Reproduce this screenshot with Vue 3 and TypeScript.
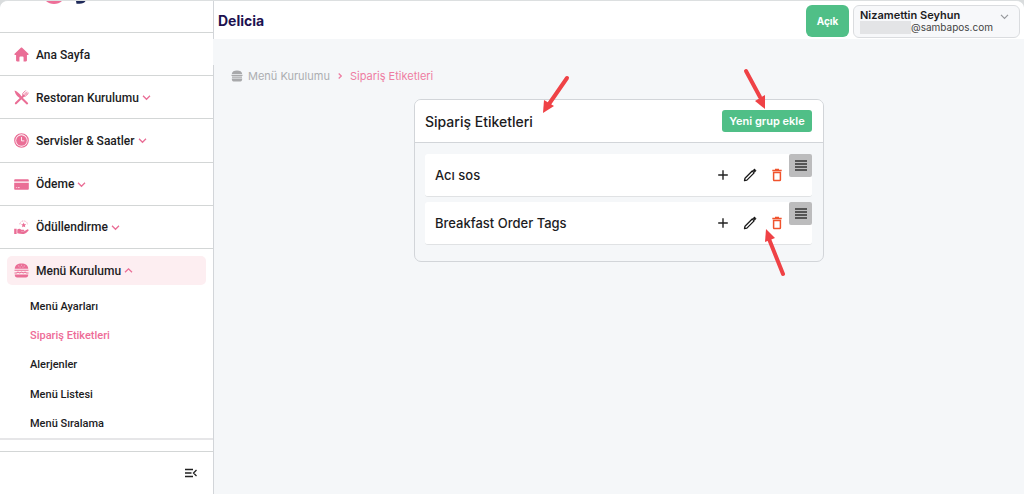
<script setup lang="ts">
import { ref } from 'vue'

type IconName = 'home' | 'tools' | 'clock' | 'card' | 'reward'

interface NavItem {
  label: string
  icon: IconName
  expandable: boolean
}

interface TagGroup {
  id: number
  name: string
}

const navItems: NavItem[] = [
  { label: 'Ana Sayfa', icon: 'home', expandable: false },
  { label: 'Restoran Kurulumu', icon: 'tools', expandable: true },
  { label: 'Servisler & Saatler', icon: 'clock', expandable: true },
  { label: 'Ödeme', icon: 'card', expandable: true },
  { label: 'Ödüllendirme', icon: 'reward', expandable: true },
]

const subItems: string[] = [
  'Menü Ayarları',
  'Sipariş Etiketleri',
  'Alerjenler',
  'Menü Listesi',
  'Menü Sıralama',
]

const activeSub = ref('Sipariş Etiketleri')
const menuOpen = ref(true)

const groups = ref<TagGroup[]>([
  { id: 1, name: 'Acı sos' },
  { id: 2, name: 'Breakfast Order Tags' },
])

function removeGroup(id: number): void {
  groups.value = groups.value.filter((g) => g.id !== id)
}
</script>

<template>
  <div class="app">
    <aside class="sidebar">
      <div class="brand">
        <svg width="44" height="4" viewBox="0 0 44 4" aria-hidden="true">
          <path d="M2 0h16c-2 2-5 3-8 3S4 2 2 0z" fill="#ee6f98" />
          <path d="M32 0h9.500c-1 1.800-3 2.800-6 2.800H32.500z" fill="#1f2a5a" />
        </svg>
      </div>
      <nav class="nav">
        <div class="nav-list">
          <a v-for="item in navItems" :key="item.label" class="nav-item" href="#">
            <svg class="nav-icon" viewBox="0 0 16 16" aria-hidden="true">
              <template v-if="item.icon === 'home'">
                <path d="M7.300.9c.4-.4 1-.4 1.400 0l6.700 6.400c.5.500.2 1.300-.5 1.300H13.800v5.600c0 .7-.4 1.200-1.100 1.200H10.200v-4.300c0-.7-.4-1.100-1-1.100H6.800c-.6 0-1 .4-1 1.100v4.300H3.300c-.7 0-1.100-.5-1.100-1.200V8.600H1.100c-.7 0-1-.8-.5-1.300z" fill="currentColor" />
              </template>
              <template v-else-if="item.icon === 'tools'">
                <path d="M.6.600C3 1.200 6.200 4.200 8.300 7.200L6.700 8.900C4 7.500 1 4.500.6.600z" fill="currentColor" />
                <path d="M8.800 9.300 14 14.300M2 14.200 10.500 5.800" stroke="currentColor" stroke-width="2.200" stroke-linecap="round" fill="none" />
                <path d="M12.200.8 9.600 3.400c-.7.800-.6 1.900.1 2.700.8.800 2 .9 2.800.2l2.700-2.600M13.500 2.100l-2.400 2.400M14.500 3l-2.400 2.400" stroke="currentColor" stroke-width="1" stroke-linecap="round" fill="none" />
              </template>
              <template v-else-if="item.icon === 'clock'">
                <circle cx="8" cy="8" r="7.200" fill="none" stroke="currentColor" stroke-width="1.300" />
                <circle cx="8" cy="8" r="5.700" fill="currentColor" />
                <path d="M8 4.300V8.400H11" fill="none" stroke="#fff" stroke-width=".9" />
              </template>
              <template v-else-if="item.icon === 'card'">
                <path d="M1.400 2.300h13.200c.7 0 1.200.5 1.200 1.200v1.300H.2V3.500c0-.7.500-1.200 1.200-1.200zM.2 6h15.600v6.500c0 .7-.5 1.200-1.200 1.200H1.400c-.7 0-1.200-.5-1.200-1.200z" fill="currentColor" />
                <path d="M2 11.300h1M4 11.300h2" stroke="#fff" stroke-width=".8" />
              </template>
              <template v-else>
                <path d="M.2 9.300h2.600v5.600H.2zM3.500 10c1.800-1 3.200-.7 4.300.3h2.500c1 0 1 1.300 0 1.300H7.500v.5h3.300l3.300-2c.9-.5 2 .5 1.200 1.400-1.300 1.500-2.700 3.300-5 3.400-2.500.1-4.500-.2-6.800-.8z" fill="currentColor" />
                <path d="m10.300 2.700.8 1.700 1.900.2-1.400 1.300.4 1.900-1.700-.9-1.700.9.400-1.900-1.400-1.300 1.900-.2z" fill="currentColor" />
                <path d="M6.200 4.500C6.600 2.300 8 1 10.300 1s3.700 1.300 4.100 3.500" fill="none" stroke="currentColor" stroke-width=".8" stroke-dasharray="1 1.200" />
              </template>
            </svg>
            <span>{{ item.label }}</span>
            <svg v-if="item.expandable" class="chevron" viewBox="0 0 9 9" aria-hidden="true">
              <path d="M1 2.800 4.500 6.300 8 2.800" />
            </svg>
          </a>
        </div>
        <button class="nav-open" type="button" :aria-expanded="menuOpen" @click="menuOpen = !menuOpen">
          <svg class="nav-icon" viewBox="0 0 16 16" aria-hidden="true">
            <path d="M.8 6C1 2.500 3.800.5 8 .5S15 2.500 15.200 6zM.8 12.200h14.400c0 2-.9 3.300-2.500 3.300H3.300C1.700 15.500.8 14.200.8 12.200z" fill="currentColor" />
            <path d="M.5 7.800h15M.5 10.700h2.200l1.500-1 1.900 1 1.900-1 1.900 1 1.900-1 1.500 1h2.200" fill="none" stroke="currentColor" stroke-width="1.100" />
            <path d="M4.500 3.200h1M7.500 2.400h1M10.500 3.200h1M6 4.400h1M9 4.400h1" stroke="#fff" stroke-width=".6" />
          </svg>
          <span>Menü Kurulumu</span>
          <svg class="chevron" viewBox="0 0 9 9" aria-hidden="true">
            <path d="M1 6.300 4.500 2.800 8 6.300" />
          </svg>
        </button>
        <div v-if="menuOpen" class="sub-list">
          <a
            v-for="sub in subItems"
            :key="sub"
            href="#"
            class="sub-item"
            :class="{ active: sub === activeSub }"
            @click.prevent="activeSub = sub"
          >{{ sub }}</a>
        </div>
      </nav>
      <div class="sidebar-foot">
        <button type="button" aria-label="Menüyü daralt">
          <svg width="14" height="10" viewBox="0 0 14 10" aria-hidden="true">
            <path d="M1 1.500h8M1 5h6.500M1 8.500h8M12.500 2 9.500 5l3 3" fill="none" stroke="#222" stroke-width="1.300" />
          </svg>
        </button>
      </div>
    </aside>

    <div class="page">
      <header class="topbar">
        <h1 class="title">Delicia</h1>
        <button class="status" type="button">Açık</button>
        <button class="user" type="button">
          <span class="user-text">
            <span class="user-name">Nizamettin Seyhun</span>
            <span class="user-mail"><span class="redacted"></span>@sambapos.com</span>
          </span>
          <svg class="user-chevron" viewBox="0 0 9 9" aria-hidden="true">
            <path d="M1 2.800 4.500 6.300 8 2.800" />
          </svg>
        </button>
      </header>

      <main class="content">
        <div class="crumbs">
          <svg class="crumb-icon" viewBox="0 0 12 12" aria-hidden="true">
            <path d="M.8 4C1 1.700 3 .6 6 .6S11 1.700 11.200 4zM.8 8.500h10.400c0 1.800-.6 3-1.700 3h-7C1.400 11.500.8 10.300.8 8.500z" fill="#a8a9ab" />
            <path d="M.5 5.300h11M1 7.200h10" stroke="#a8a9ab" stroke-width="1.300" />
          </svg>
          <a class="crumb" href="#">Menü Kurulumu</a>
          <svg class="crumb-sep" viewBox="0 0 8 8" aria-hidden="true">
            <path d="M2.700 1.500 5.300 4 2.700 6.500" fill="none" stroke="#ee7da2" stroke-width="1.300" />
          </svg>
          <a class="crumb current" href="#">Sipariş Etiketleri</a>
        </div>

        <section class="card">
          <div class="card-head">
            <h2 class="card-title">Sipariş Etiketleri</h2>
            <button class="add" type="button">Yeni grup ekle</button>
          </div>
          <div class="card-body">
            <div v-for="group in groups" :key="group.id" class="row">
              <span class="row-name">{{ group.name }}</span>
              <div class="actions">
                <button class="action" type="button" aria-label="Ekle">
                  <svg viewBox="0 0 14 14" aria-hidden="true">
                    <path d="M7 2.200v9.600M2.200 7h9.600" fill="none" stroke="#222" stroke-width="1.400" />
                  </svg>
                </button>
                <button class="action" type="button" aria-label="Düzenle">
                  <svg viewBox="0 0 14 14" aria-hidden="true">
                    <path d="M1.500 12.600 2 10.200 9.200 3l1.900 1.900-7.200 7.200z" fill="none" stroke="#1b1b1b" stroke-width="1.300" stroke-linejoin="round" />
                    <path d="m9.800 2.400 1-1c.4-.4.9-.4 1.300 0l.6.6c.4.400.4.900 0 1.300l-1 1z" fill="#1b1b1b" stroke="#1b1b1b" stroke-width=".5" />
                  </svg>
                </button>
                <button class="action" type="button" aria-label="Sil" @click="removeGroup(group.id)">
                  <svg viewBox="0 0 14 14" aria-hidden="true">
                    <path d="M3.600 4.600h6.800v7.200c0 .5-.3.800-.8.800H4.400c-.5 0-.8-.3-.8-.8zM2.300 2.400h9.400M5 1.600h4" fill="none" stroke="#f0532d" stroke-width="1.500" />
                  </svg>
                </button>
              </div>
              <button class="handle" type="button" aria-label="Sırala">
                <svg width="12" height="11" viewBox="0 0 12 11" aria-hidden="true">
                  <path d="M0 1h12M0 4h12M0 7h12M0 10h12" stroke="#333" stroke-width="1.400" />
                </svg>
              </button>
            </div>
          </div>
          <svg class="arrows" width="410" height="220" viewBox="0 0 410 220" aria-hidden="true">
            <g stroke="#ef4246" stroke-width="4" stroke-linecap="round">
              <path d="M153 18 135 44" />
              <path d="M332 11 346 37" />
              <path d="M369 214 355 179" />
            </g>
            <g fill="#ef4246">
              <path d="m129 53 1-13 10 6z" />
              <path d="m351 49-10-8 10-6z" />
              <path d="m352 169-1 13 10-4z" />
            </g>
          </svg>
        </section>
      </main>
    </div>
  </div>
</template>

<style>
body {
  margin: 0;
  background: #d9dcdd;
}
</style>

<style scoped>
* {
  box-sizing: border-box;
}

.app {
  display: flex;
  min-height: 100vh;
  background: #f5f7f9;
  border-top: 1px solid #dcdfe0;
  border-radius: 8px 8px 0 0;
  overflow: hidden;
  font-family: Inter, "Open Sans", sans-serif;
  color: #1c1c1e;
}

button {
  margin: 0;
  padding: 0;
  border: 0;
  background: none;
  font: inherit;
  color: inherit;
  cursor: pointer;
}

a {
  color: inherit;
  text-decoration: none;
}

svg {
  display: block;
  flex: none;
}

.sidebar {
  position: relative;
  display: flex;
  flex-direction: column;
  flex: none;
  width: 214px;
  background: #fff;
  border-right: 1px solid #d2d5d9;
  font-family: Roboto, sans-serif;
  font-weight: 500;
}

/* Break in the divider below the top bar */
.sidebar::after {
  content: "";
  position: absolute;
  top: 38px;
  right: -1px;
  width: 1px;
  height: 26px;
  background: #f5f7f9;
}

.brand {
  height: 32px;
  padding-left: 44px;
  border-bottom: 1px solid #d3d6d6;
}

.nav {
  border-bottom: 2px solid #e6e6e8;
}

.nav-list {
  display: grid;
  grid-auto-rows: 1fr;
  height: 216px;
}

.nav-item {
  display: flex;
  align-items: center;
  padding: 1px 0 0 14px;
  border-bottom: 1px solid #d3d6d6;
  font-size: 12px;
}

.nav-icon {
  width: 15px;
  height: 15px;
  margin-right: 7px;
  color: #ea6e96;
}

.chevron {
  width: 9px;
  height: 9px;
  margin-left: 3px;
  fill: none;
  stroke: #ea6e96;
  stroke-width: 1.3;
}

.nav-open {
  display: flex;
  align-items: center;
  width: calc(100% - 14px);
  height: 29px;
  margin: 7px 7px 0;
  padding-left: 7px;
  border-radius: 5px;
  background: #fdeef1;
  font-size: 12px;
}

.sub-list {
  display: grid;
  grid-auto-rows: 1fr;
  height: 146px;
  margin: 7px 0 0 30px;
}

.sub-item {
  display: flex;
  align-items: center;
  font-size: 11px;
}

.sub-item.active {
  color: #ee6c97;
}

.sidebar-foot {
  display: flex;
  flex: 1;
  justify-content: flex-end;
  align-items: center;
  margin-top: 11px;
  padding-right: 15px;
  border-top: 1px solid #d3d6d6;
}

.page {
  flex: 1;
  min-width: 0;
}

.topbar {
  display: flex;
  align-items: center;
  gap: 4px;
  height: 38px;
  padding: 2px 4px 0;
  background: #fff;
}

.title {
  flex: 1;
  margin: 0;
  font-size: 14px;
  line-height: 20px;
  font-weight: 700;
  color: #1d1250;
}

.status {
  width: 43px;
  height: 32px;
  border-radius: 6px;
  background: #50bf87;
  color: #fff;
  font-size: 10px;
  font-weight: 700;
}

.user {
  display: flex;
  justify-content: space-between;
  width: 167px;
  height: 33px;
  padding: 3px 10px 0 6px;
  border: 1px solid #dadcdf;
  border-radius: 6px;
  background: #f7f8fa;
  text-align: left;
}

.user-text {
  display: flex;
  flex-direction: column;
}

.user-name {
  font-size: 11px;
  line-height: 12px;
  font-weight: 600;
}

.user-mail {
  display: flex;
  font-size: 10px;
  line-height: 12px;
  color: #444;
}

.redacted {
  width: 51px;
  height: 13px;
  background: #e3e4e6;
}

.user-chevron {
  width: 9px;
  height: 9px;
  margin-top: 3px;
  fill: none;
  stroke: #96989c;
  stroke-width: 1.2;
}

.content {
  padding: 29px 17px;
}

.crumbs {
  display: flex;
  align-items: center;
  height: 16px;
  font-size: 11px;
  color: #acaeb1;
}

.crumb-icon {
  width: 12px;
  height: 12px;
  margin-right: 5px;
}

.crumb-sep {
  width: 8px;
  height: 8px;
  margin: 0 6px;
}

.crumb.current {
  color: #ee7da2;
}

.card {
  position: relative;
  max-width: 410px;
  margin: 15px auto 0;
  border: 1px solid #d2d5d9;
  border-radius: 7px;
  background: #f5f7f9;
}

.card-head {
  display: flex;
  justify-content: space-between;
  align-items: center;
  height: 43px;
  padding: 0 11px 0 10px;
  border-bottom: 1px solid #d2d5d9;
  border-radius: 6px 6px 0 0;
  background: #fff;
}

.card-title {
  margin: 0;
  font-size: 14px;
  font-weight: 500;
}

.add {
  width: 90px;
  height: 22px;
  border-radius: 3px;
  background: #50bf87;
  color: #fff;
  font-size: 11px;
  font-weight: 600;
}

.card-body {
  display: flex;
  flex-direction: column;
  gap: 5px;
  padding: 11px 11px 16px 10px;
}

.row {
  display: flex;
  align-items: center;
  height: 43px;
  padding-left: 10px;
  border-bottom: 1px solid #e0e2e4;
  border-radius: 3px;
  background: #fff;
}

.row-name {
  flex: 1;
  font-size: 13px;
  font-weight: 500;
}

.actions {
  display: flex;
  gap: 13px;
  margin-right: 5px;
}

.action svg {
  width: 14px;
  height: 14px;
}

.handle {
  display: flex;
  justify-content: center;
  align-items: center;
  align-self: flex-start;
  width: 23px;
  height: 23px;
  border-radius: 2px;
  background: #bcbcbd;
}

.arrows {
  position: absolute;
  top: -40px;
  left: -1px;
  pointer-events: none;
}
</style>
